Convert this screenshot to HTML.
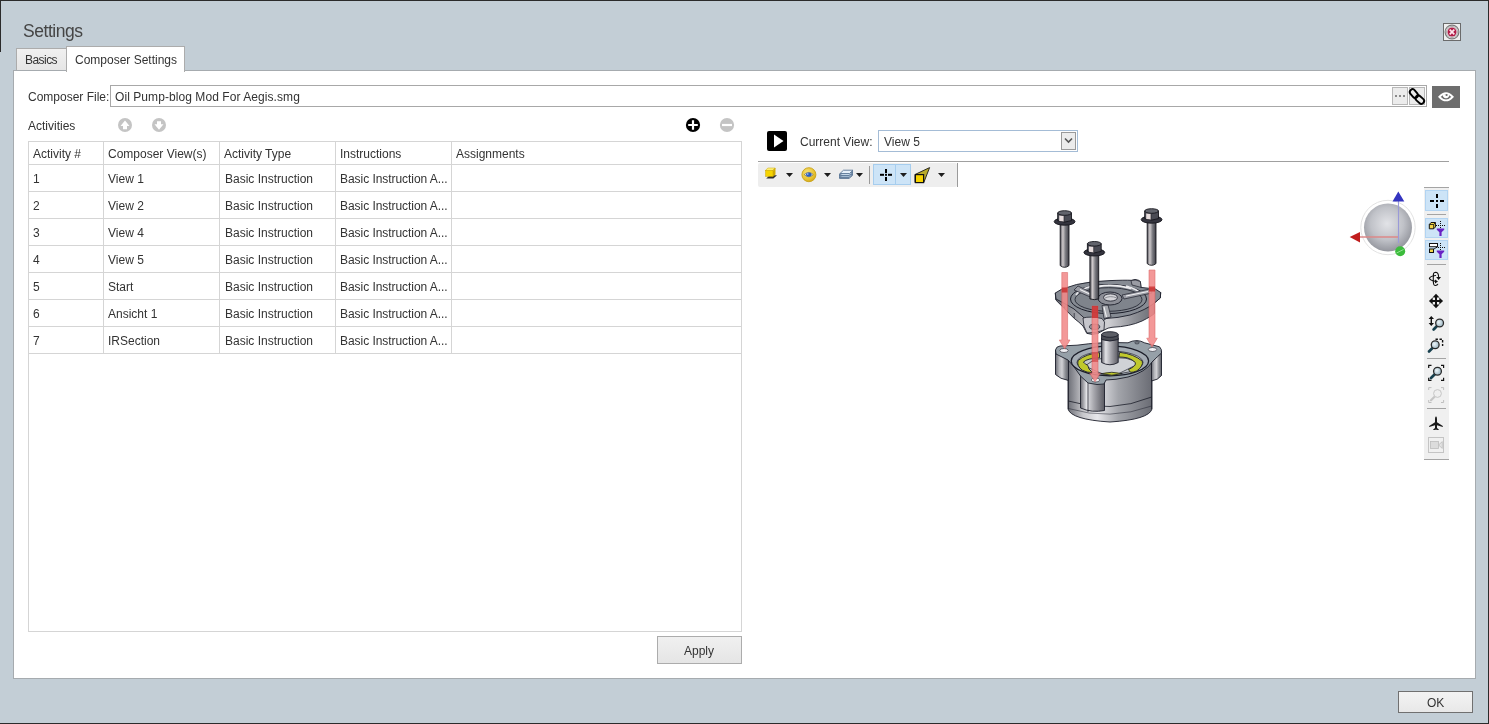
<!DOCTYPE html>
<html><head><meta charset="utf-8">
<style>
html,body{margin:0;padding:0;}
body{width:1489px;height:724px;position:relative;overflow:hidden;background:#c3ced6;font-family:"Liberation Sans",sans-serif;font-size:12px;color:#333;}
.a{position:absolute;}
.t{position:absolute;white-space:nowrap;line-height:12px;will-change:transform;}
.bd{position:absolute;box-sizing:border-box;}
</style></head><body>
<!-- window borders -->
<div class="a" style="left:0;top:0;width:1489px;height:1px;background:#2b2b2b"></div>
<div class="a" style="left:0;top:0;width:1px;height:52px;background:#2b2b2b"></div>
<div class="a" style="left:1488px;top:0;width:1px;height:724px;background:#2b2b2b"></div>
<div class="a" style="left:0;top:723px;width:1489px;height:1px;background:#2b2b2b"></div>

<!-- title -->
<div class="t" style="left:23px;top:22px;font-size:17.5px;line-height:18px;letter-spacing:-0.45px;color:#454545">Settings</div>

<!-- close button -->
<div class="bd" style="left:1443px;top:23px;width:18px;height:18px;border:1px solid #6b6b6b;background:#f0f0f0"></div>

<!-- tabs -->
<div class="bd" style="left:16px;top:48px;width:51px;height:23px;border:1px solid #acacac;border-bottom:none;background:linear-gradient(#f0f0f0,#e5e5e5)"></div>
<div class="t" style="left:25px;top:54px;letter-spacing:-0.55px">Basics</div>
<div class="bd" style="left:66px;top:46px;width:119px;height:26px;border:1px solid #acacac;border-bottom:none;background:#fff;z-index:2"></div>
<div class="t" style="left:75px;top:54px;z-index:3">Composer Settings</div>

<!-- panel -->
<div class="bd" style="left:13px;top:70px;width:1463px;height:609px;border:1px solid #a6abaf;background:#fff"></div>

<!-- composer file -->
<div class="t" style="left:28px;top:91px">Composer File:</div>
<div class="bd" style="left:110px;top:85px;width:1317px;height:22px;border:1px solid #a8a8a8;background:#fff"></div>
<div class="t" style="left:114.5px;top:91px;letter-spacing:0.07px">Oil Pump-blog Mod For Aegis.smg</div>
<div class="bd" style="left:1392px;top:87px;width:16px;height:18px;border:1px solid #b8b8b8;background:#ececec"></div>
<div class="bd" style="left:1409px;top:87px;width:16px;height:18px;border:1px solid #b8b8b8;background:#ececec"></div>
<div class="a" style="left:1432px;top:86px;width:28px;height:22px;background:#6d6d6d"></div>

<!-- activities -->
<div class="t" style="left:28px;top:120px">Activities</div>

<!-- table -->
<div class="bd" style="left:28px;top:141px;width:714px;height:491px;border:1px solid #d5d5d5;background:#fff"></div>

<!-- table grid -->
<div class="a" style="left:29px;top:164px;width:712px;height:1px;background:#d5d5d5"></div>
<div class="a" style="left:29px;top:191px;width:712px;height:1px;background:#d5d5d5"></div>
<div class="a" style="left:29px;top:218px;width:712px;height:1px;background:#d5d5d5"></div>
<div class="a" style="left:29px;top:245px;width:712px;height:1px;background:#d5d5d5"></div>
<div class="a" style="left:29px;top:272px;width:712px;height:1px;background:#d5d5d5"></div>
<div class="a" style="left:29px;top:299px;width:712px;height:1px;background:#d5d5d5"></div>
<div class="a" style="left:29px;top:326px;width:712px;height:1px;background:#d5d5d5"></div>
<div class="a" style="left:29px;top:353px;width:712px;height:1px;background:#d5d5d5"></div>
<div class="a" style="left:103px;top:142px;width:1px;height:211px;background:#d5d5d5"></div>
<div class="a" style="left:219px;top:142px;width:1px;height:211px;background:#d5d5d5"></div>
<div class="a" style="left:335px;top:142px;width:1px;height:211px;background:#d5d5d5"></div>
<div class="a" style="left:451px;top:142px;width:1px;height:211px;background:#d5d5d5"></div>
<div class="t" style="left:33px;top:148px">Activity #</div>
<div class="t" style="left:108px;top:148px">Composer View(s)</div>
<div class="t" style="left:224px;top:148px">Activity Type</div>
<div class="t" style="left:340px;top:148px">Instructions</div>
<div class="t" style="left:456px;top:148px">Assignments</div>
<div class="t" style="left:33px;top:173px">1</div>
<div class="t" style="left:108px;top:173px">View 1</div>
<div class="t" style="left:225px;top:173px">Basic Instruction</div>
<div class="t" style="left:340px;top:173px;letter-spacing:-0.05px">Basic Instruction A...</div>
<div class="t" style="left:33px;top:200px">2</div>
<div class="t" style="left:108px;top:200px">View 2</div>
<div class="t" style="left:225px;top:200px">Basic Instruction</div>
<div class="t" style="left:340px;top:200px;letter-spacing:-0.05px">Basic Instruction A...</div>
<div class="t" style="left:33px;top:227px">3</div>
<div class="t" style="left:108px;top:227px">View 4</div>
<div class="t" style="left:225px;top:227px">Basic Instruction</div>
<div class="t" style="left:340px;top:227px;letter-spacing:-0.05px">Basic Instruction A...</div>
<div class="t" style="left:33px;top:254px">4</div>
<div class="t" style="left:108px;top:254px">View 5</div>
<div class="t" style="left:225px;top:254px">Basic Instruction</div>
<div class="t" style="left:340px;top:254px;letter-spacing:-0.05px">Basic Instruction A...</div>
<div class="t" style="left:33px;top:281px">5</div>
<div class="t" style="left:108px;top:281px">Start</div>
<div class="t" style="left:225px;top:281px">Basic Instruction</div>
<div class="t" style="left:340px;top:281px;letter-spacing:-0.05px">Basic Instruction A...</div>
<div class="t" style="left:33px;top:308px">6</div>
<div class="t" style="left:108px;top:308px">Ansicht 1</div>
<div class="t" style="left:225px;top:308px">Basic Instruction</div>
<div class="t" style="left:340px;top:308px;letter-spacing:-0.05px">Basic Instruction A...</div>
<div class="t" style="left:33px;top:335px">7</div>
<div class="t" style="left:108px;top:335px">IRSection</div>
<div class="t" style="left:225px;top:335px">Basic Instruction</div>
<div class="t" style="left:340px;top:335px;letter-spacing:-0.05px">Basic Instruction A...</div>

<!-- apply -->
<div class="bd" style="left:657px;top:636px;width:85px;height:28px;border:1px solid #acacac;background:linear-gradient(#f0f0f0,#e5e5e5)"></div>
<div class="t" style="left:684px;top:645px">Apply</div>

<!-- right side -->
<div class="a" style="left:767px;top:131px;width:20px;height:20px;background:#000;border-radius:2px"></div>
<div class="t" style="left:800px;top:136px">Current View:</div>
<div class="bd" style="left:878px;top:130px;width:200px;height:22px;border:1px solid #a4bcd6;background:#fff"></div>
<div class="t" style="left:884px;top:136px">View 5</div>
<div class="a" style="left:758px;top:161px;width:691px;height:1px;background:#a0a0a0"></div>
<div class="a" style="left:758px;top:163px;width:199px;height:24px;background:#eeeeee;border-radius:2px"></div>

<!-- OK -->
<div class="bd" style="left:1398px;top:691px;width:75px;height:22px;border:1px solid #707070;background:linear-gradient(#f3f3f3,#e8e8e8)"></div>
<div class="t" style="left:1427px;top:697px">OK</div>
<!-- icons layer 1 -->
<svg class="a" style="left:0;top:0;z-index:10" width="1489" height="724" viewBox="0 0 1489 724">
 <!-- close -->
 <circle cx="1452" cy="32" r="6.9" fill="#f2f2f2" stroke="#7c7c7c" stroke-width="1.2"/>
 <circle cx="1452" cy="32" r="5.5" fill="none" stroke="#a4a4a4" stroke-width="0.9"/>
 <circle cx="1452" cy="32" r="4.5" fill="#b01e48"/>
 <path d="M1449.7 29.7L1454.3 34.3M1454.3 29.7L1449.7 34.3" stroke="#ffe8ee" stroke-width="1.7"/>
 <!-- up/down -->
 <circle cx="125" cy="125" r="7" fill="#c4c4c4"/>
 <path d="M125 120.5L129.5 126H127V129.2H123V126H120.5Z" fill="#fff"/>
 <circle cx="159" cy="125" r="7" fill="#c4c4c4"/>
 <path d="M159 129.7L163.5 124.3H161V121.2H157V124.3H154.5Z" fill="#fff"/>
 <!-- plus / minus -->
 <circle cx="693" cy="125" r="7.1" fill="#000"/>
 <path d="M688.2 125H697.8M693 120.2V129.8" stroke="#fff" stroke-width="2.2"/>
 <circle cx="727" cy="125" r="7.1" fill="#c4c4c4"/>
 <path d="M722 125H732" stroke="#fff" stroke-width="2.2"/>
 <!-- dots -->
 <rect x="1395" y="95" width="2" height="2" fill="#8a8a8a"/>
 <rect x="1399" y="95" width="2" height="2" fill="#8a8a8a"/>
 <rect x="1403" y="95" width="2" height="2" fill="#8a8a8a"/>
 <!-- link -->
 <g fill="none" stroke="#000" stroke-width="1.9">
  <rect x="1409.10" y="90.80" width="9.6" height="5.6" rx="2.8" transform="rotate(50 1413.9 93.6)"/>
  <rect x="1415.00" y="96.80" width="9.6" height="5.6" rx="2.8" transform="rotate(42 1419.8 99.6)"/>
 </g>
 <!-- eye -->
 <path d="M1439.3 96.8Q1446 89.6 1452.7 96.8Q1446 104 1439.3 96.8Z" fill="none" stroke="#fff" stroke-width="1.9"/>
 <path d="M1442.8 94.2A3.3 3.3 0 1 0 1449.2 94.2Z" fill="#fff"/>
 <circle cx="1446.6" cy="95" r="1.1" fill="#6d6d6d"/>
 <!-- play -->
 <path d="M774 134.5L783.5 141L774 147.5Z" fill="#fff"/>
 <!-- combo dropdown -->
 <rect x="1061.5" y="132.5" width="14" height="17" fill="#ececec" stroke="#9a9a9a" stroke-width="1"/>
 <path d="M1065 138.5L1068.5 142L1072 138.5" fill="none" stroke="#555" stroke-width="1.6"/>
</svg>
<!-- horizontal toolbar icons -->
<svg class="a" style="left:0;top:0;z-index:11" width="1489" height="724" viewBox="0 0 1489 724">
 <defs>
  <linearGradient id="gy" x1="0" y1="0" x2="1" y2="1"><stop offset="0" stop-color="#fff27a"/><stop offset="0.5" stop-color="#f5d400"/><stop offset="1" stop-color="#d8b000"/></linearGradient>
  <radialGradient id="geye" cx="0.4" cy="0.35" r="0.7"><stop offset="0" stop-color="#f8e27a"/><stop offset="0.7" stop-color="#e6c230"/><stop offset="1" stop-color="#cfa418"/></radialGradient>
 </defs>
 <!-- selected button bg -->
 <rect x="873.5" y="164.5" width="37" height="20" fill="#cde4f7" stroke="#a6cdee" stroke-width="1"/>
 <rect x="895" y="165" width="1" height="19" fill="#a6cdee"/>
 <!-- cube with shadow -->
 <path d="M766.2 178.6L769.8 175.2H777L773.4 178.6Z" fill="#2e2e2e"/>
 <path d="M765.6 170.4L767.8 168H775.2L773 170.4Z" fill="#fff27a" stroke="#c9a600" stroke-width="0.5"/>
 <path d="M773 170.4L775.2 168V174.2L773 176.4Z" fill="#d4ad00" stroke="#c9a600" stroke-width="0.5"/>
 <rect x="765.6" y="170.4" width="7.4" height="6" fill="#f6d400" stroke="#c9a600" stroke-width="0.5"/>
 <!-- arrows -->
 <path d="M786 173H793L789.5 177Z" fill="#1e1e1e"/>
 <path d="M824 173H831L827.5 177Z" fill="#1e1e1e"/>
 <path d="M856 173H863L859.5 177Z" fill="#1e1e1e"/>
 <path d="M900 173H907L903.5 177Z" fill="#1e1e1e"/>
 <path d="M938 173H945L941.5 177Z" fill="#1e1e1e"/>
 <!-- eye circle -->
 <circle cx="808.9" cy="174.7" r="7" fill="url(#geye)" stroke="#c9a114" stroke-width="0.9"/>
 <path d="M804.3 174.6Q808.8 170.2 813.3 174.6Q808.8 179 804.3 174.6Z" fill="#e6eefa" stroke="#4a4a3a" stroke-width="0.5"/>
 <ellipse cx="808.8" cy="174.6" rx="2.8" ry="2.1" fill="#2d5fba"/>
 <circle cx="807.8" cy="174" r="0.7" fill="#d8e6ff"/>
 <!-- layers -->
 <g stroke="#5a7696" stroke-width="0.9" stroke-linejoin="round">
  <path d="M839.5 177.5L843 174.5H852.5L849 177.5Z" fill="#9fb8d0"/>
  <path d="M839.5 175.5L843 172.5H852.5L849 175.5Z" fill="#c5d8ea"/>
  <path d="M840 173.5L843.5 170.2H853L849.5 173.5Z" fill="#e6f1fb"/>
  <path d="M839.5 173.5V178.5H849L852.5 175.5V170.5" fill="none"/>
 </g>
 <!-- separator -->
 <rect x="869" y="166" width="1" height="18" fill="#9a9a9a"/>
 <rect x="957" y="163" width="1" height="24" fill="#9a9a9a"/>
 <!-- selected button -->
 <path d="M886 174.8H880M886 174.8H892M886 174.8V169M886 174.8V181" stroke="none"/>
 <g fill="#000">
  <rect x="880" y="173.8" width="4" height="2"/><rect x="888" y="173.8" width="4" height="2"/>
  <rect x="885" y="169" width="2" height="4"/><rect x="885" y="177" width="2" height="4"/>
  <rect x="885" y="173.8" width="2" height="2"/>
 </g>
 <!-- camera cone -->
 <path d="M915 174.5L929.6 167.6L923.8 182.5H915Z" fill="#b9ab2c" stroke="#1a1a1a" stroke-width="0.9" stroke-linejoin="round"/>
 <rect x="915.4" y="174.6" width="8.2" height="8" fill="#f6d300" stroke="#111" stroke-width="1.2"/>
</svg>
<!-- vertical toolbar + triad -->
<svg class="a" style="left:0;top:0;z-index:12" width="1489" height="724" viewBox="0 0 1489 724">
 <defs>
  <radialGradient id="lens" cx="0.4" cy="0.4" r="0.6"><stop offset="0" stop-color="#eef6fa"/><stop offset="1" stop-color="#9fb8c4"/></radialGradient>
  <radialGradient id="sph" cx="0.48" cy="0.42" r="0.62"><stop offset="0" stop-color="#e2e3e7"/><stop offset="0.55" stop-color="#c0c2c8"/><stop offset="1" stop-color="#8c8e96"/></radialGradient>
 </defs>
 <rect x="1424" y="187" width="25" height="273" fill="#f0f0f0"/>
 <rect x="1424" y="187" width="25" height="1" fill="#a4a4a4"/>
 <rect x="1424" y="459" width="25" height="1" fill="#a4a4a4"/>
 <!-- selected buttons -->
 <rect x="1425.5" y="190.5" width="22" height="20" fill="#cde4f7" stroke="#b2d4f2" stroke-width="1"/>
 <rect x="1425.5" y="218.5" width="22" height="19" fill="#cde4f7" stroke="#b2d4f2" stroke-width="1"/>
 <rect x="1425.5" y="240.5" width="22" height="19" fill="#cde4f7" stroke="#b2d4f2" stroke-width="1"/>
 <!-- separators -->
 <rect x="1427" y="214" width="19" height="1" fill="#a4a4a4"/>
 <rect x="1427" y="264" width="19" height="1" fill="#a4a4a4"/>
 <rect x="1427" y="358" width="19" height="1" fill="#a4a4a4"/>
 <rect x="1427" y="408" width="19" height="1" fill="#a4a4a4"/>
 <!-- crosshair -->
 <g fill="#000">
  <rect x="1430" y="200" width="4" height="2"/><rect x="1440" y="200" width="4" height="2"/>
  <rect x="1436" y="194" width="2" height="4"/><rect x="1436" y="204" width="2" height="4"/>
  <rect x="1436" y="200" width="2" height="2"/>
 </g>
 <!-- btn2: cube + dotted cross + funnel -->
 <path d="M1429.3 224.5L1431 222.5H1435.4V227L1433.6 228.8H1429.3Z" fill="#f3d64a" stroke="#111" stroke-width="1"/>
 <path d="M1429.3 224.5H1433.6V228.8M1433.6 224.5L1435.4 222.5" fill="none" stroke="#111" stroke-width="0.8"/>
 <g fill="#111"><rect x="1436" y="225" width="1" height="1"/><rect x="1438" y="225" width="1" height="1"/><rect x="1442" y="225" width="1" height="1"/><rect x="1444" y="225" width="1" height="1"/><rect x="1440" y="221" width="1" height="1"/><rect x="1440" y="223" width="1" height="1"/><rect x="1440" y="227" width="1" height="1"/><rect x="1440" y="225" width="1" height="1"/></g>
 <path d="M1436.8 228.6H1444.2V229.79999999999998L1441.6 232.2V236.0H1439.4V232.2L1436.8 229.79999999999998Z" fill="#6a22c4"/>
 <!-- btn3 -->
 <rect x="1429.5" y="243.5" width="8" height="3.2" fill="#fff" stroke="#111" stroke-width="1"/>
 <path d="M1437.5 246.7L1434 249" stroke="#111" stroke-width="0.9"/>
 <rect x="1429.5" y="249" width="4" height="3.5" fill="#f3d64a" stroke="#111" stroke-width="1"/>
 <g fill="#111"><rect x="1436" y="247" width="1" height="1"/><rect x="1438" y="247" width="1" height="1"/><rect x="1442" y="247" width="1" height="1"/><rect x="1444" y="247" width="1" height="1"/><rect x="1440" y="243" width="1" height="1"/><rect x="1440" y="245" width="1" height="1"/><rect x="1440" y="249" width="1" height="1"/><rect x="1440" y="247" width="1" height="1"/></g>
 <path d="M1436.8 250.6H1444.2V251.79999999999998L1441.6 254.2V258.0H1439.4V254.2L1436.8 251.79999999999998Z" fill="#6a22c4"/>
 <!-- rotate -->
 <g fill="none" stroke="#111" stroke-width="1.1" stroke-linecap="round">
  <path d="M1435.6 275.5Q1430.6 276 1429.4 278.3Q1430.4 280.6 1435 281.2"/>
  <path d="M1433.6 276.2Q1432.8 272.4 1435.5 272.2Q1438.4 272.3 1438.6 276.6"/>
  <path d="M1433.3 275V281.8"/>
  <path d="M1433.4 282Q1433.4 285.6 1435.6 285.5Q1437.2 285.4 1437.7 284.3"/>
 </g>
 <path d="M1436.2 277H1441L1438.6 280Z" fill="#111"/>
 <path d="M1435 279.4L1438 281.4L1435 283.6Z" fill="#111"/>
 <!-- move -->
 <g fill="#111">
  <rect x="1435" y="296" width="2" height="11"/><rect x="1430.5" y="300" width="11" height="2"/>
  <path d="M1436 293.7L1439.5 297.5H1432.5Z"/><path d="M1436 308.3L1439.5 304.5H1432.5Z"/>
  <path d="M1428.9 301L1432.7 297.5V304.5Z"/><path d="M1443.1 301L1439.3 297.5V304.5Z"/>
 </g>
 <!-- zoom with arrows -->
 <g fill="#111">
  <rect x="1430.6" y="318" width="1.4" height="6"/>
  <path d="M1431.3 316L1434 319H1428.6Z"/><path d="M1431.3 326L1434 323H1428.6Z"/>
 </g>
 <path d="M1437 326L1433.6 329.5" stroke="#17404e" stroke-width="2.7" stroke-linecap="round"/>
 <circle cx="1439.6" cy="323" r="3.9" fill="url(#lens)" stroke="#2a2a2a" stroke-width="1.3"/>
 <!-- zoom box -->
 <path d="M1435.5 339.2H1442.6V346" fill="none" stroke="#111" stroke-width="1.4" stroke-dasharray="2.4 1.6"/>
 <path d="M1432.5 348L1429 351.5" stroke="#17404e" stroke-width="2.7" stroke-linecap="round"/>
 <circle cx="1435.2" cy="344.8" r="3.9" fill="url(#lens)" stroke="#2a2a2a" stroke-width="1.3"/>
 <!-- zoom fit -->
 <path d="M1428.7 368V365.4H1431.5M1441 365.4H1443.6V368M1443.6 377.8V380.4H1441M1431.5 380.4H1428.7V377.8" fill="none" stroke="#111" stroke-width="1.2"/>
 <path d="M1434.8 374.2L1431 378" stroke="#17404e" stroke-width="2.7" stroke-linecap="round"/>
 <circle cx="1437.5" cy="371.2" r="3.9" fill="url(#lens)" stroke="#2a2a2a" stroke-width="1.3"/>
 <!-- zoom disabled -->
 <g opacity="0.35">
 <path d="M1428.7 390V387.6H1431.5M1441 387.6H1443.6V390M1443.6 400V402.5H1441M1431.5 402.5H1428.7V400" fill="none" stroke="#666" stroke-width="1"/>
 <path d="M1434.8 396.5L1431 400.3" stroke="#777" stroke-width="2.2" stroke-linecap="round"/>
 <circle cx="1437.5" cy="393.5" r="3.9" fill="#eee" stroke="#777" stroke-width="1"/>
 </g>
 <!-- airplane -->
 <path d="M1436 416.3Q1437 416.8 1437 419V422.3L1442.8 426V427L1437 425.3V428L1438.8 429.4V430H1436.6L1436 429.3L1435.4 430H1433.2V429.4L1435 428V425.3L1429.2 427V426L1435 422.3V419Q1435 416.8 1436 416.3Z" fill="#1a1a1a"/>
 <!-- camera disabled -->
 <rect x="1428.5" y="437.5" width="15" height="15" fill="none" stroke="#c4c4c4" stroke-width="1"/>
 <rect x="1430.5" y="441.5" width="8" height="7" fill="#dcdcdc" stroke="#bdbdbd" stroke-width="0.8"/>
 <path d="M1438.5 445L1442.3 441.6V448.4Z" fill="#e4e4e4" stroke="#bdbdbd" stroke-width="0.8" stroke-linejoin="round"/>
 <!-- triad -->
 <circle cx="1388" cy="227.5" r="27.2" fill="none" stroke="#e2e2e2" stroke-width="1"/>
 <circle cx="1388" cy="227.5" r="24" fill="url(#sph)"/>
 <path d="M1398.5 201V243" stroke="#9a9ad8" stroke-width="1.1"/>
 <path d="M1398.3 191.6L1404.3 201.5H1392.5Z" fill="#3434c0"/>
 <path d="M1360 237H1398" stroke="#d88" stroke-width="1.6"/>
 <path d="M1349.7 237L1360 232V242.5Z" fill="#c11d1d"/>
 <circle cx="1400.2" cy="251.3" r="5" fill="#3cbc3c"/>
 <path d="M1396.5 253L1403.5 249.5" stroke="#a8e8a8" stroke-width="0.8"/>
</svg>
<!-- 3D model -->
<svg class="a" style="left:0;top:0;z-index:9" width="1489" height="724" viewBox="0 0 1489 724">
 <defs>
  <linearGradient id="shaft" x1="0" y1="0" x2="1" y2="0"><stop offset="0" stop-color="#505058"/><stop offset="0.3" stop-color="#cfcacc"/><stop offset="0.6" stop-color="#7c7c82"/><stop offset="1" stop-color="#3e3e46"/></linearGradient>
  <linearGradient id="pin" x1="0" y1="0" x2="1" y2="0"><stop offset="0" stop-color="#6a6a72"/><stop offset="0.25" stop-color="#e2e2e6"/><stop offset="0.55" stop-color="#a8a8ae"/><stop offset="1" stop-color="#5a5a62"/></linearGradient>
  <linearGradient id="cyl" x1="0" y1="0" x2="1" y2="0"><stop offset="0" stop-color="#6c6e76"/><stop offset="0.18" stop-color="#c8c8cc"/><stop offset="0.35" stop-color="#e6e6ea"/><stop offset="0.6" stop-color="#a2a4aa"/><stop offset="1" stop-color="#6a6c74"/></linearGradient>
  <linearGradient id="pside" x1="0" y1="0" x2="1" y2="0"><stop offset="0" stop-color="#6a6c74"/><stop offset="0.3" stop-color="#b8b9be"/><stop offset="0.5" stop-color="#d0d0d4"/><stop offset="0.75" stop-color="#8e9096"/><stop offset="1" stop-color="#5e6068"/></linearGradient>
 </defs>
 <g stroke="#1c1e2a" stroke-width="0.9" stroke-linejoin="round">
 <!-- ===== lower body ===== -->
 <path d="M1068 356V409Q1071 419.5 1110 422Q1149 419.5 1152 409V356Z" fill="url(#cyl)"/>
 <path d="M1068.3 401Q1110 414 1151.7 397" fill="none" stroke-width="0.8"/>
 <path d="M1068.3 408.5Q1110 421 1151.7 406" fill="none" stroke-width="0.6" opacity="0.8"/>
 <!-- flange sides -->
 <path d="M1055.5 350V374.5Q1060 379 1068.5 380.5V357L1056 352Z" fill="url(#pside)"/>
 <path d="M1161.5 351V375.5Q1158 380 1151.5 381V357Z" fill="url(#pside)"/>
 <path d="M1080.5 370V408Q1092 413 1104.5 410.5V372Z" fill="url(#pin)"/>
 <path d="M1088 383V412M1068.5 380.5V409M1151.5 381V409" fill="none" stroke-width="0.7"/>
 <!-- flange top face -->
 <path d="M1055.5 350Q1056 346.5 1060 346L1077 345.2Q1100 341.8 1128 342.8Q1132 340.6 1137 340.6Q1141 340.8 1144.5 342.8L1159.5 346.8Q1162 349 1161.5 353Q1158 356 1152 362Q1146 372 1128 377Q1115 380 1106 380L1104 384Q1098 385.5 1088 383L1080.5 376Q1074 366 1068 360Q1060 356 1056 354Z" fill="#96a0a8"/>
 <!-- opening -->
 <ellipse cx="1109.9" cy="361" rx="38.7" ry="14.8" fill="#a4acb4" stroke-width="1.3"/>
 <ellipse cx="1110" cy="362.5" rx="33" ry="11.5" fill="#c4c8cd" stroke-width="0.7"/>
 <!-- rotor -->
 <path d="M1085 366Q1097 356 1110 359Q1128 355 1138 364Q1126 370 1120 373Q1110 378 1098 372Z" fill="#d0d2d6" stroke-width="0.7"/>
 <!-- yellow crescents -->
 <path d="M1099.5 352.6Q1085.7 354 1078.1 360.5Q1076.5 366 1082.3 370.2Q1087 372.8 1092.5 372.6Q1088 369 1087.8 365.4Q1083 362.5 1083.6 361.9Q1087 358.5 1099.5 357.8Z" fill="#c0c82c" stroke-width="0.9"/>
 <path d="M1119.6 352.3Q1134 354 1142.3 361.2Q1143.5 366 1136.8 370.9Q1133 372.5 1130.6 372.3Q1129 370.5 1128.5 369.5Q1135 366.5 1135.4 364Q1136 361 1127.2 357.8Q1123 357 1118.9 357Z" fill="#c0c82c" stroke-width="0.9"/>
 <path d="M1100.9 373.7Q1112 370.8 1122.3 373.7Q1112 376.6 1100.9 373.7Z" fill="#c0c82c" stroke-width="0.8"/>
 <!-- shaft -->
 <path d="M1101.6 338V362.5Q1110 367 1118.2 362.5V338Z" fill="url(#pin)"/>
 <path d="M1101.6 334.5V339.5Q1110 342.5 1118.2 339.5V334.5Z" fill="#4a4c54"/>
 <ellipse cx="1109.9" cy="334.5" rx="8.3" ry="2.8" fill="#5c5e66"/>
 <!-- holes -->
 <ellipse cx="1064" cy="350.5" rx="4.2" ry="2" fill="#f0f0f4" stroke-width="0.6"/>
 <ellipse cx="1152.5" cy="349.5" rx="4.2" ry="2" fill="#f0f0f4" stroke-width="0.6"/>
 <ellipse cx="1095.5" cy="380" rx="4.2" ry="2" fill="#f0f0f4" stroke-width="0.6"/>
 <ellipse cx="1137" cy="342.8" rx="2.2" ry="1.2" fill="#7a8088" stroke-width="0.5"/>
 <!-- ===== top plate ===== -->
 <path d="M1055.3 293L1055.8 300L1064.5 308.7L1074.2 318.4Q1079 322 1083 326L1086.8 333.4Q1092 335 1097.4 333.6L1104.2 330Q1108 327.6 1112 327.3Q1130 326.5 1142 321Q1152 316 1154.4 313.5V303L1160.3 298L1160.7 292.5Z" fill="url(#pside)"/>
 <path d="M1055.3 293L1061.5 289.3L1076.5 284.5Q1092 281 1110 280.6Q1125 280 1131.5 280.3L1135 279.5Q1139 279.8 1140.4 281.6L1141 287.4L1155.4 289L1160.7 292.5L1160.3 298L1154.4 303Q1146 310 1130 315Q1118 318 1106 318.5L1102 322L1093 323.5Q1085 320 1082 316L1074 309Q1064 303 1056 299Z" fill="#868b93"/>
 <path d="M1064.5 306.5V308.5M1074.2 313V318.2" fill="none" stroke-width="0.7"/>
 <!-- front ear -->
 <path d="M1083 318Q1090 316 1102 318.5L1104.5 322L1104 330Q1097 333 1087 333Q1083 327 1083 318Z" fill="#c6c6cc" stroke-width="0.8"/>
 <ellipse cx="1094.6" cy="326.8" rx="5.2" ry="2.6" fill="#8e9098" stroke-width="0.7"/>
 <!-- ring ridge -->
 <ellipse cx="1108.5" cy="299" rx="38" ry="14.5" fill="none" stroke-width="1"/>
 <ellipse cx="1108.5" cy="299.5" rx="33.5" ry="11.8" fill="#7f848c" stroke-width="0.8"/>
 <path d="M1098 286.5Q1114 283.5 1131 288.5" fill="none" stroke="#eeeef0" stroke-width="1.8"/>
 <path d="M1076 295Q1080 289 1092 286M1126 286Q1138 289 1142 295" fill="none" stroke="#e8e8ec" stroke-width="1.6"/>
 <!-- spokes -->
 <path d="M1078 286L1098 296L1095 299L1074 290Z" fill="#9a9ca4" stroke-width="0.7"/>
 <path d="M1122 295L1150 289L1152 293L1124 299Z" fill="#9a9ca4" stroke-width="0.7"/>
 <path d="M1102 305.5L1108 305L1111 317L1104 318.5Z" fill="#a8aab0" stroke-width="0.7"/>
 <path d="M1080 289.5L1095 296.5M1126 296L1148 291.5M1104 307L1106.5 317" fill="none" stroke="#f0f0f2" stroke-width="1.1"/>
 <!-- hub -->
 <ellipse cx="1110" cy="298.5" rx="12" ry="6.5" fill="#8c8e96" stroke-width="0.9"/>
 <ellipse cx="1110.5" cy="297.5" rx="7" ry="3.6" fill="#d6d6da" stroke-width="0.8"/>
 <path d="M1104 298.5Q1110 295 1117 298" fill="none" stroke="#8a8c92" stroke-width="1"/>
 <!-- top lug -->
 <path d="M1131 280.5Q1136 279 1140.4 281.6L1141 287.4Q1136 286 1132 285Z" fill="#9a9ca4" stroke-width="0.7"/>
 </g>
 <!-- red arrows -->
 <g fill="#f28a8a" stroke="#d65a5a" stroke-width="0.6" opacity="0.88">
  <path d="M1061.8 272.5H1067.6V340H1070L1064.65 348.8L1059.3 340H1061.8Z"/>
  <path d="M1149 270H1155V338.2H1157.3L1152.0 347L1146.7 338.2H1149Z"/>
  <path d="M1092 306H1098V373.2H1100.3L1095.0 381.8L1089.7 373.2H1092Z"/>
 </g>
 <g fill="#c42020" opacity="0.7">
  <rect x="1061.8" y="287.5" width="5.6" height="5"/>
  <rect x="1149" y="286.5" width="6" height="5"/>
  <rect x="1092" y="306" width="6" height="12"/>
  <rect x="1092" y="352" width="6" height="10" opacity="0.6"/>
 </g>
 <!-- bolts -->
 <g id="bolt1" transform="translate(1064.6 210.6)" stroke="#15151c" stroke-width="0.9">
  <path d="M-4.4 12V55Q0 58.5 4.4 55V12Z" fill="url(#shaft)"/>
  <ellipse cx="0" cy="11" rx="10.4" ry="3.6" fill="#34343e"/>
  <path d="M-6.9 2.4V10Q0 13 6.9 10V2.4Z" fill="#4a4b54"/>
  <path d="M-5.4 5H-0.6V11L-5.4 10.4Z" fill="#e8dede" stroke="none"/>
  <path d="M-0.6 5V11" stroke-width="0.6"/>
  <ellipse cx="0" cy="2.4" rx="6.9" ry="2.3" fill="#62646c"/>
 </g>
 <use href="#bolt1" transform="translate(87 -2)"/>
 <g transform="translate(1094.3 241.4)" stroke="#15151c" stroke-width="0.9">
  <path d="M-4.4 12V57.5Q0 59 4.4 57.5V12Z" fill="url(#shaft)"/>
  <ellipse cx="0" cy="11" rx="10.4" ry="3.6" fill="#34343e"/>
  <path d="M-6.9 2.4V10Q0 13 6.9 10V2.4Z" fill="#4a4b54"/>
  <path d="M-5.4 5H-0.6V11L-5.4 10.4Z" fill="#e8dede" stroke="none"/>
  <path d="M-0.6 5V11" stroke-width="0.6"/>
  <ellipse cx="0" cy="2.4" rx="6.9" ry="2.3" fill="#62646c"/>
 </g>
</svg>
</body></html>
